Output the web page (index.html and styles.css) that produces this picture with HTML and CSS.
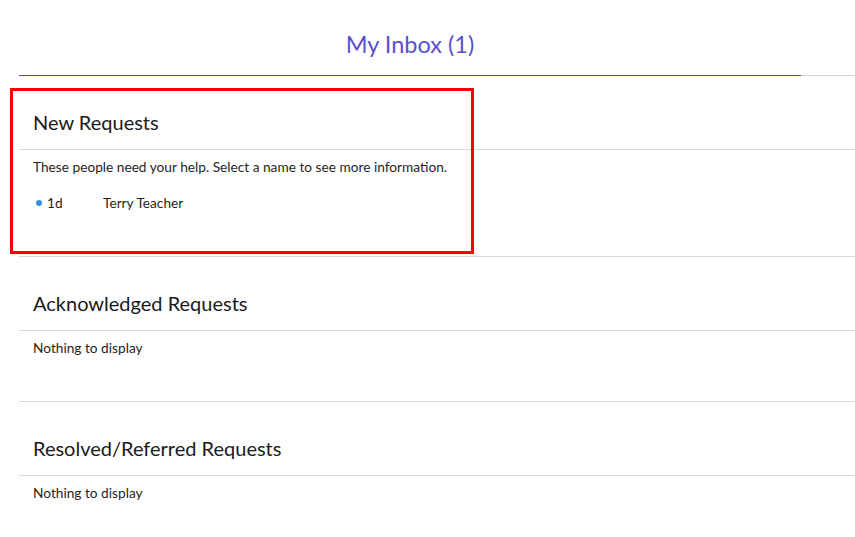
FILE: index.html
```html
<!DOCTYPE html>
<html lang="en">
<head>
<meta charset="utf-8">
<title>My Inbox</title>
<link rel="stylesheet" href="styles.css">
</head>
<body>
<div class="page">
  <div class="title-bar">
    <h1 class="title">My Inbox (1)</h1>
  </div>

  <section class="section">
    <h2 class="section-head">New Requests</h2>
    <div class="section-body">
      <p class="intro">These people need your help. Select a name to see more information.</p>
      <div class="request-row">
        <span class="age"><span class="dot"></span>1d</span>
        <span class="name">Terry Teacher</span>
      </div>
    </div>
  </section>

  <section class="section">
    <h2 class="section-head">Acknowledged Requests</h2>
    <div class="section-body">
      <p class="empty">Nothing to display</p>
    </div>
  </section>

  <section class="section">
    <h2 class="section-head">Resolved/Referred Requests</h2>
    <div class="section-body">
      <p class="empty">Nothing to display</p>
    </div>
  </section>

  <div class="highlight"></div>
</div>
</body>
</html>
```

FILE: styles.css
```css
html, body {
  margin: 0;
  padding: 0;
  background: #ffffff;
}

body {
  font-family: "Lato", "Noto Sans", "Liberation Sans", sans-serif;
  color: #1f1f1f;
}

.page {
  position: relative;
  padding-left: 19px;
}

.title-bar {
  border-bottom: 1px solid #d6d6d6;
}

.title {
  width: 782px;
  margin: 0 0 -1px 0;
  padding: 32px 0 18px;
  text-align: center;
  font-size: 23.5px;
  line-height: 25px;
  font-weight: 400;
  color: #5a4fcf;
  border-bottom: 1px solid #5a4fb5;
}

.section {
  border-bottom: 1px solid #d9d9d9;
}

.section-head {
  margin: 0;
  padding: 34px 14px 15px;
  font-size: 20px;
  line-height: 24px;
  font-weight: 400;
  color: #1a1a1a;
  border-bottom: 1px solid #d9d9d9;
}

.section-body {
  padding: 9px 14px 45px;
  font-size: 13.7px;
  line-height: 16px;
}

.intro,
.empty {
  margin: 0;
}

.request-row {
  display: flex;
  align-items: center;
  margin-top: 20px;
}

.age {
  display: flex;
  align-items: center;
  width: 70px;
}

.dot {
  width: 6px;
  height: 6px;
  border-radius: 50%;
  background: #3b8fd8;
  margin: 0 5px 0 3px;
}

.highlight {
  position: absolute;
  left: 10px;
  top: 88px;
  width: 458px;
  height: 160px;
  border: 3px solid #ff0000;
}
```
